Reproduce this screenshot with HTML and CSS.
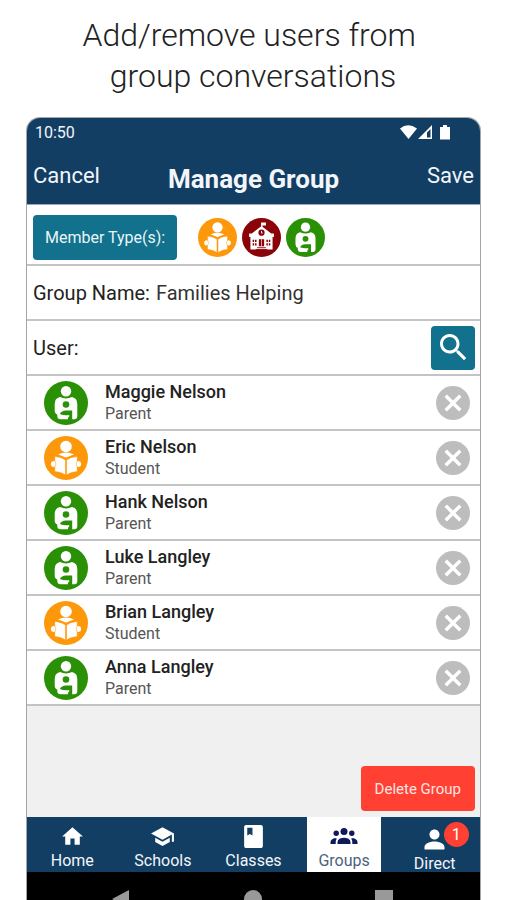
FILE: index.html
```html
<!DOCTYPE html>
<html lang="en">
<head>
<meta charset="utf-8">
<meta name="viewport" content="width=device-width, initial-scale=1">
<title>Manage Group</title>
<link rel="stylesheet" href="styles.css">
</head>
<body>
<svg class="sprite" aria-hidden="true">
  <symbol id="parent" viewBox="0 0 44 44">
    <circle cx="22" cy="22" r="22" fill="#2a9006"/>
    <circle cx="22" cy="10.300" r="5.200" fill="#fff"/>
    <path d="M16 16q6 2.800 12 0q5.300 1.200 5.300 7v12q0 3.300-3 3.300H16.500q-3.200 0-3.200-3.300v-1.500q-2.600-.8-2.600-4V23q0-5.800 5.300-7z" fill="#fff"/>
    <circle cx="22" cy="23.500" r="3.300" fill="#2a9006"/>
    <path d="M15.800 33q1.700-3.500 6.200-3.500h6.200V39H24v-2.300q1.800-1.200 1.200-2.700q-5 .8-9.400-1z" fill="#2a9006"/>
  </symbol>
  <symbol id="student" viewBox="0 0 44 44">
    <circle cx="22" cy="22" r="22" fill="#fd980b"/>
    <circle cx="22" cy="10.500" r="5.800" fill="#fff"/>
    <path d="M14 18.500q8-4 16 0l-8 3.500z" fill="#fff"/>
    <path d="M13 18.700l9 3.500 9-3.500" fill="none" stroke="#fd980b" stroke-width="1.200"/>
    <circle cx="9.800" cy="28" r="2.900" fill="#fff"/>
    <circle cx="34.200" cy="28" r="2.900" fill="#fff"/>
    <path d="M10.800 20.500q7 .5 10.600 3.500V39q-3.600-3-10.600-3.500v-4.500q2.200-3 0-6zM33.200 20.500q-7 .5-10.600 3.500V39q3.600-3 10.600-3.500v-4.500q-2.200-3 0-6z" fill="#fff" stroke="#fd980b" stroke-width=".5"/>
  </symbol>
  <symbol id="school" viewBox="0 0 44 44">
    <circle cx="22" cy="22" r="22" fill="#890309"/>
    <path d="M21.500 12V5h5.500v3.500h-4V12z" fill="#fff"/>
    <path d="M22 9l11 8.500h3v4H8v-4h3zM9.500 21h25v14.500h-25z" fill="#fff"/>
    <circle cx="22" cy="16.500" r="3.500" fill="#890309"/>
    <path d="M22 14.500V17h1.500" fill="none" stroke="#fff"/>
    <path d="M12 24.500h1.700v2.500H12zm2.700 0h1.700v2.500h-1.700zM12 28.500h1.700V31H12zm2.700 0h1.700V31h-1.700zM27.500 24.500h1.700v2.500h-1.700zm2.700 0h1.700v2.500h-1.700zM27.500 28.500h1.700V31h-1.700zm2.700 0h1.700V31h-1.700zM19 24h6v8h-6z" fill="#890309"/>
    <path d="M17 33.500h10M15.500 35.500h13" stroke="#890309"/>
    <path d="M22 24v8" stroke="#fff" stroke-width=".7"/>
  </symbol>
  <symbol id="remove" viewBox="2 2 20 20">
    <path fill="#bdbdbd" d="M12 2C6.470 2 2 6.470 2 12s4.470 10 10 10 10-4.470 10-10S17.530 2 12 2z"/>
    <path fill="#fff" d="M17 15.590L15.590 17 12 13.410 8.410 17 7 15.590 10.590 12 7 8.410 8.410 7 12 10.590 15.590 7 17 8.410 13.410 12z"/>
  </symbol>
</svg>

<h1 class="headline">Add/remove users from&nbsp;<br>group conversations</h1>

<main class="phone">
  <header class="top">
    <div class="status">
      <span>10:50</span>
      <svg class="signals" viewBox="0 0 52 16" fill="#fff" aria-hidden="true">
        <path d="M0 4.500Q8 -2 17 4.500L8.500 15z"/>
        <path fill-rule="evenodd" d="M18 15L32 1v14zM27 8.500v5h3.500V5z"/>
        <path d="M40 3h3V1h4v2h3v12.500H40z"/>
      </svg>
    </div>
    <div class="titlebar">
      <button class="text-button">Cancel</button>
      <h2>Manage Group</h2>
      <button class="text-button save">Save</button>
    </div>
  </header>

  <section class="row types">
    <button class="teal member-types">Member Type(s):</button>
    <div class="type-icons">
      <svg role="img" aria-label="Students"><use href="#student"/></svg>
      <svg role="img" aria-label="Schools"><use href="#school"/></svg>
      <svg role="img" aria-label="Parents"><use href="#parent"/></svg>
    </div>
  </section>
  <div class="row field">
    <label for="group-name">Group Name:</label>
    <input id="group-name" type="text" value="Families Helping">
  </div>
  <div class="row field">
    <label for="user">User:</label>
    <input id="user" type="text">
    <button class="teal search" aria-label="Search">
      <svg viewBox="3 3 18 18" fill="#fff"><path d="M15.500 14h-.79l-.28-.27C15.410 12.590 16 11.110 16 9.500 16 5.910 13.090 3 9.500 3S3 5.910 3 9.500 5.910 16 9.500 16c1.610 0 3.090-.59 4.230-1.570l.27.28v.79l5 4.990L20.490 19l-4.990-5zm-6 0C7.010 14 5 11.990 5 9.500S7.010 5 9.500 5 14 7.010 14 9.500 11.990 14 9.500 14z"/></svg>
    </button>
  </div>

  <ul class="members">
    <li class="row member"><svg class="avatar"><use href="#parent"/></svg><div class="who"><strong>Maggie Nelson</strong><span>Parent</span></div><button class="remove" aria-label="Remove Maggie Nelson"><svg><use href="#remove"/></svg></button></li>
    <li class="row member"><svg class="avatar"><use href="#student"/></svg><div class="who"><strong>Eric Nelson</strong><span>Student</span></div><button class="remove" aria-label="Remove Eric Nelson"><svg><use href="#remove"/></svg></button></li>
    <li class="row member"><svg class="avatar"><use href="#parent"/></svg><div class="who"><strong>Hank Nelson</strong><span>Parent</span></div><button class="remove" aria-label="Remove Hank Nelson"><svg><use href="#remove"/></svg></button></li>
    <li class="row member"><svg class="avatar"><use href="#parent"/></svg><div class="who"><strong>Luke Langley</strong><span>Parent</span></div><button class="remove" aria-label="Remove Luke Langley"><svg><use href="#remove"/></svg></button></li>
    <li class="row member"><svg class="avatar"><use href="#student"/></svg><div class="who"><strong>Brian Langley</strong><span>Student</span></div><button class="remove" aria-label="Remove Brian Langley"><svg><use href="#remove"/></svg></button></li>
    <li class="row member"><svg class="avatar"><use href="#parent"/></svg><div class="who"><strong>Anna Langley</strong><span>Parent</span></div><button class="remove" aria-label="Remove Anna Langley"><svg><use href="#remove"/></svg></button></li>
  </ul>

  <div class="actions"><button class="delete">Delete Group</button></div>

  <nav class="tabs">
    <a href="#home"><svg viewBox="0 0 24 24"><path d="M10 20v-6h4v6h5v-8h3L12 3 2 12h3v8z"/></svg>Home</a>
    <a href="#schools"><svg viewBox="0 0 24 24"><path d="M5 13.180v4L12 21l7-3.820v-4L12 17l-7-3.820zM12 3L1 9l11 6 9-4.910V17h2V9L12 3z"/></svg>Schools</a>
    <a href="#classes"><svg viewBox="0 0 24 24"><path fill-rule="evenodd" d="M19 1H5c-1.100 0-2 .9-2 2v18c0 1.100.9 2 2 2h14c1.100 0 2-.9 2-2V3c0-1.100-.9-2-2-2zM6 3.500h5v7.500l-2.500-1.500L6 11z"/></svg>Classes</a>
    <a href="#groups" class="active" aria-current="page"><svg viewBox="0 0 28 25"><circle cx="14" cy="7.500" r="3.500"/><circle cx="6.200" cy="9.300" r="2.700"/><circle cx="21.800" cy="9.300" r="2.700"/><path d="M7.500 20v-2q0-2.300 2.500-3.400q4-1.600 8 0q2.500 1.100 2.500 3.400v2zM.5 20v-2q0-2.700 4.500-4q1 .5 2 .6q-1.300 1.400-1.300 3.400v2zM27.500 20v-2q0-2.700-4.500-4q-1 .5-2 .6q1.300 1.400 1.300 3.400v2z"/></svg>Groups</a>
    <a href="#direct" class="direct"><svg viewBox="2 2 20 20"><path d="M12 12c2.210 0 4-1.790 4-4s-1.790-4-4-4-4 1.790-4 4 1.790 4 4 4zm0 1.500c-2.670 0-8 1.340-8 4.500v2h16v-2c0-3.160-5.330-4.500-8-4.500z"/></svg>Direct<span class="badge">1</span></a>
  </nav>
  <div class="system" aria-hidden="true">
    <svg viewBox="0 0 18 18"><path d="M17 0v18L0 9z"/></svg>
    <svg viewBox="0 0 18 18"><circle cx="9" cy="9" r="9"/></svg>
    <svg viewBox="0 0 18 18"><path d="M0 0h18v18H0z"/></svg>
  </div>
</main>
</body>
</html>
```

FILE: styles.css
```css
* { box-sizing: border-box; }

body {
  margin: 0;
  height: 100vh;
  overflow: hidden;
  display: flex;
  flex-direction: column;
  background: #fff;
  color: #222;
  font-family: Roboto, sans-serif;
}

button {
  border: 0;
  padding: 0;
  background: none;
  color: inherit;
  font: inherit;
}

.sprite { display: none; }

.headline {
  margin: 0;
  padding: 15px 0 20px;
  font-size: 32px;
  line-height: 41px;
  font-weight: 300;
  text-align: center;
}

.phone {
  flex: 1;
  display: flex;
  flex-direction: column;
  margin: 0 25px 0 26px;
  border: 1px solid #a5a5a5;
  border-bottom: 0;
  border-radius: 14px 14px 0 0;
  overflow: hidden;
  background: #f0f0f0;
}

.top {
  background: #123e64;
  color: #f2f5fa;
  border-bottom: 1px solid #9fa9bd;
}

.status {
  display: flex;
  justify-content: space-between;
  align-items: center;
  height: 28px;
  padding: 0 28px 0 8px;
  font-size: 16px;
}

.signals { width: 52px; height: 16px; }

.titlebar {
  display: grid;
  grid-template-columns: 1fr auto 1fr;
  height: 58px;
  padding: 0 6px;
}

.titlebar h2 {
  margin: 0;
  padding-top: 8px;
  align-self: center;
  font-size: 26px;
  line-height: 28px;
  font-weight: 700;
}

.text-button {
  justify-self: start;
  align-self: center;
  font-size: 22px;
}

.save { justify-self: end; }

.row {
  display: flex;
  align-items: center;
  height: 55px;
  border-bottom: 2px solid #c4c4c4;
  background: #fff;
  padding: 0 5px 0 6px;
}

.types { height: 61px; gap: 21px; padding-top: 5px; }

.teal {
  background: #12718c;
  color: #e9f5f8;
  border-radius: 4px;
}

.member-types { height: 45px; padding: 0 12px; font-size: 16px; }

.type-icons { display: flex; gap: 5px; }
.type-icons svg { width: 39px; height: 39px; }

.field { font-size: 20px; gap: 6px; }

.field input {
  flex: 1;
  min-width: 0;
  border: 0;
  padding: 0;
  background: none;
  color: #333;
  font: inherit;
}

.search {
  display: grid;
  place-items: center;
  width: 44px;
  height: 44px;
}

.search svg { width: 27px; height: 27px; }

.members { margin: 0; padding: 0; list-style: none; }

.member { padding: 0 10px 0 17px; }

.avatar { width: 44px; height: 44px; }

.who {
  flex: 1;
  display: flex;
  flex-direction: column;
  margin-left: 17px;
  line-height: 22px;
}

.who strong { font-size: 18px; font-weight: 500; }
.who span { font-size: 16px; color: #555; }

.remove svg { display: block; width: 34px; height: 34px; }

.actions {
  flex: 1;
  display: flex;
  justify-content: flex-end;
  align-items: flex-end;
  padding: 0 5px 6px;
}

.delete {
  height: 45px;
  padding: 0 14px;
  border-radius: 4px;
  background: #ff4032;
  color: #fde6e2;
  font-size: 15px;
}

.tabs {
  display: grid;
  grid-template-columns: repeat(5, 1fr);
  grid-template-rows: 100%;
  height: 55px;
  background: #123e64;
}

.tabs a {
  position: relative;
  display: flex;
  flex-direction: column;
  align-items: center;
  padding-top: 7px;
  color: #f2f5fa;
  font-size: 16px;
  line-height: 24px;
  text-decoration: none;
}

.tabs svg { flex: none; width: 25px; height: 25px; fill: #fff; }

.tabs .active { background: #fff; color: #4b6280; margin: 0 8px; }
.tabs .active svg { width: 28px; fill: #10195a; }
.tabs .direct { padding-top: 10px; }

.badge {
  position: absolute;
  top: 5px;
  left: calc(50% + 9px);
  width: 25px;
  border-radius: 50%;
  background: #ff4032;
  color: #fff;
  line-height: 25px;
  text-align: center;
}

.system {
  display: flex;
  justify-content: space-between;
  height: 28px;
  padding: 18px 87px 0 85px;
  overflow: hidden;
  background: #000;
}

.system svg { flex: none; width: 18px; height: 18px; fill: #999; }
```
